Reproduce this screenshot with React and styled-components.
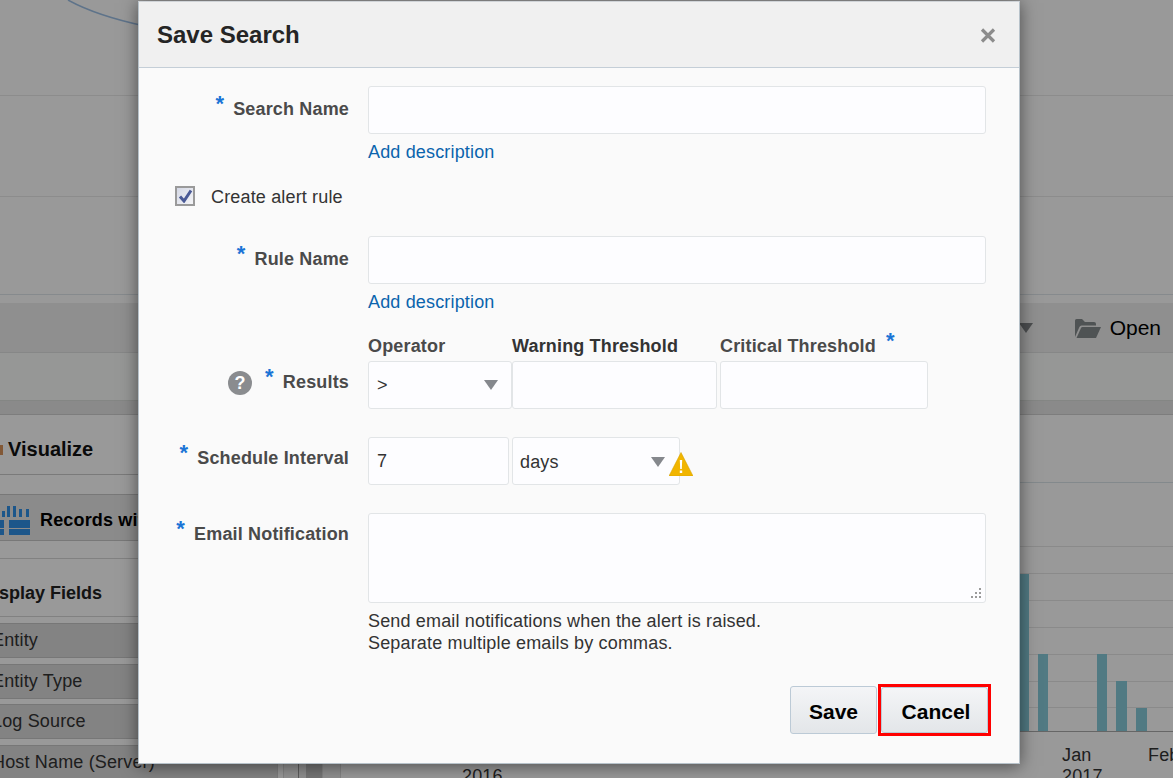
import React from "react";
import styled, { createGlobalStyle } from "styled-components";

const Global = createGlobalStyle`
  html, body { margin: 0; padding: 0; background: #fff; }
  * { box-sizing: border-box; }
`;
const FONT = `"Liberation Sans", Arial, sans-serif`;

const Page = styled.div`
  position: relative; width: 1173px; height: 778px; overflow: hidden;
  font-family: ${FONT}; font-size: 18px; letter-spacing: .16px; color: #333; background: #fff;
  display: flex; flex-direction: column;
`;
const TopChart = styled.div`
  height: 303px; flex: none; background: #fff;
  svg { display: block; }
`;
const Toolbar = styled.div`
  height: 50px; flex: none; background: #eee; border-bottom: 1px solid #dfe2e2;
  display: flex; align-items: center; justify-content: flex-end; padding: 0 12px 0 0;
`;
const Caret = styled.svg`width: 14px; height: 10px; flex: none; display: block;`;
const OpenLabel = styled.span`font-size: 21px; letter-spacing: 0; color: #000; margin-left: 9px;`;
const FolderIcon = styled.svg`width: 27px; height: 20px; margin-left: 41px; display: block;`;
const SubBar = styled.div`height: 48px; flex: none; background: #fafcfa; border-bottom: 1px solid #dcdfdc;`;
const Band = styled.div`height: 14px; flex: none; background: #e6e6e6; border-bottom: 1px solid #d0d0d0;`;
const Lower = styled.div`flex: 1; display: flex; min-height: 0;`;
const LeftPanel = styled.div`
  width: 278px; flex: none; overflow: hidden; border-right: 1px solid #d0d0d0; background: #fff;
`;
const VisualizeRow = styled.div`
  height: 60px; display: flex; align-items: center; gap: 5px; border-bottom: 1px solid #ccc;
  font-size: 20px; letter-spacing: 0; font-weight: bold; color: #111; padding-top: 10px;
`;
const VisMark = styled.span`width: 3px; height: 10px; background: #d9935a; flex: none;`;
const RecordsRow = styled.div`
  height: 47px; margin-top: 19px; background: #e8e8e8; border-top: 1px solid #c8c8c8; border-bottom: 1px solid #c8c8c8;
  display: flex; align-items: center; gap: 9px; font-size: 18px; font-weight: bold; color: #000; white-space: nowrap;
`;
const RecordsLabel = styled.span`padding-top: 6px;`;
const RecordsIcon = styled.svg`width: 31px; height: 32px; display: block; flex: none; margin-top: 2px;`;
const FieldsHead = styled.div`
  margin-top: 17px; height: 59px; border-top: 1px solid #d8d8d8; border-bottom: 1px solid #d8d8d8;
  font-size: 18px; letter-spacing: 0; font-weight: bold; color: #222; display: flex; align-items: center; padding-top: 12px;
  span { margin-left: -19px; white-space: nowrap; }
`;
const FieldList = styled.div`padding-top: 6px; display: flex; flex-direction: column; gap: 5.6px;`;
const FieldItem = styled.div`
  height: 35px; background: #dadada; border-top: 1px solid #c6c6c6; border-bottom: 1px solid #c6c6c6;
  display: flex; align-items: center; white-space: nowrap; color: #333;
  span { margin-left: -8px; }
`;
const Gutter = styled.div`width: 5px; flex: none; background: #fff;`;
const SidePane = styled.div`width: 16px; flex: none; background: #f4f4f4; border-left: 1px solid #ddd; border-right: 1px solid #999;`;
const SideGap = styled.div`width: 7px; flex: none; background: #eee;`;
const Splitter = styled.div`width: 16px; flex: none; background: #c4c4c4;`;
const SidePaneWide = styled.div`width: 19px; flex: none; background: #f0f0f0; border-left: 1px solid #ddd; border-right: 1px solid #ddd;`;
const ChartPane = styled.div`
  flex: 1; min-width: 0;
  svg { display: block; }
`;
const Overlay = styled.div`position: absolute; inset: 0; background: rgba(0,0,0,.4);`;

const Dialog = styled.div`
  position: absolute; left: 138px; top: 1px; width: 882px; height: 763px;
  background: #fafafa; border: 1px solid #b7c2ca; border-top-color: #d0d4d8;
  box-shadow: 0 2px 16px rgba(0,0,0,.5);
  display: flex; flex-direction: column;
`;
const Header = styled.div`
  height: 66px; flex: none; background: #f0f0f0; border-bottom: 1px solid #c4ced7;
  display: flex; align-items: center; justify-content: space-between; padding: 0 23px 0 18px;
`;
const Title = styled.h1`margin: 0; font-size: 24px; letter-spacing: 0; font-weight: bold; color: #252525; line-height: 30px;`;
const CloseIcon = styled.svg`width: 16px; height: 15px; display: block; margin-top: 2px;`;
const Body = styled.div`flex: 1; padding: 18px 33px 0 0; display: flex; flex-direction: column;`;
const FormRow = styled.div`
  display: grid; grid-template-columns: 210px 618px; column-gap: 19px; align-items: start;
  margin-top: ${p => p.$mt || 0}px;
`;
const Label = styled.label`
  display: flex; justify-content: flex-end; align-items: flex-start;
  padding-top: ${p => p.$top}px; font-weight: bold; color: #4a4a4a; line-height: 22px; white-space: nowrap;
`;
const Star = styled.span`
  font-family: ${FONT}; font-size: 22px; font-weight: bold; color: #1a74d6; line-height: 22px;
  margin: -5px ${p => p.$mr ?? 9}px 0 ${p => p.$ml ?? 0}px;
`;
const TextField = styled.input`
  display: block; width: ${p => p.$w || "100%"}; height: 48px; border: 1px solid #e2e5e7; border-radius: 3px;
  background: #fdfdff; font: 18px ${FONT}; color: #333; padding: 0 8px; outline: none; flex: none;
`;
const LinkLine = styled.a`
  display: block; margin-top: 7px; line-height: 22px; color: #0a64ad; text-decoration: none; width: max-content;
`;
const CheckRow = styled.div`
  display: flex; align-items: center; gap: 16px; margin: 23px 0 0 36px; height: 20px; color: #333;
`;
const CheckText = styled.span`padding-top: 2px;`;
const CheckBox = styled.span`
  width: 20px; height: 20px; flex: none; border: 2px solid #9a9a9a; background: linear-gradient(135deg,#d5d9e6,#f4f4f6);
  display: flex; align-items: center; justify-content: center;
  svg { width: 15px; height: 14px; display: block; }
`;
const HelpBadge = styled.span`
  width: 24px; height: 24px; border-radius: 50%; background: #8a8c8f; color: #fff; font-weight: bold; font-size: 18px;
  display: flex; align-items: center; justify-content: center; margin: 0 13px 0 0; flex: none; line-height: 24px;
`;
const ThresholdGrid = styled.div`
  display: grid; grid-template-columns: 144px 205px 208px; row-gap: 4px;
`;
const ColHead = styled.div`
  font-weight: bold; line-height: 22px; color: ${p => p.$dark ? "#333" : "#4a4a4a"}; white-space: nowrap; display: flex;
  margin-left: ${p => p.$ml || 0}px;
`;
const SelectBox = styled.div`
  height: 48px; width: ${p => p.$w}px; flex: none; margin-left: ${p => p.$ml || 0}px; border: 1px solid #e2e5e7; border-radius: 3px; background: #fdfdff;
  display: flex; align-items: center; justify-content: space-between; padding: ${p => p.$pad};
  color: #333;
`;
const ThresholdInput = styled(TextField)`margin-left: ${p => p.$ml || 0}px;`;
const ScheduleFields = styled.div`display: flex; align-items: flex-start;`;
const WarnIcon = styled.svg`width: 24px; height: 24px; flex: none; display: block; margin: 15px 0 0 -11px;`;
const AreaBox = styled.div`
  position: relative; height: 90px; border: 1px solid #e2e5e7; border-radius: 3px; background: #fdfdff;
`;
const Grip = styled.svg`position: absolute; right: 3px; bottom: 3px; width: 11px; height: 11px; display: block;`;
const Hint = styled.p`margin: 7px 0 0; line-height: 22px; color: #333;`;
const Actions = styled.div`display: flex; justify-content: flex-end; margin: 32px -5px 0 0; gap: 1px; align-items: flex-start;`;
const Btn = styled.button`
  width: ${p => p.$w}px; height: ${p => p.$h}px; display: block;
  border: 1px solid #bccad6; border-radius: 3px; background: linear-gradient(#f4f5f7,#e3e6e9);
  font: bold 21px ${FONT}; color: #000; padding: 3px 0 0 ${p => p.$pl || 0}px;
`;
const FlagFrame = styled.div`margin-top: -2px; border: 3px solid #f00; background: #fafafa;`;

const Down = ({ fill = "#85888d", ...rest }) => (
  <Caret viewBox="0 0 14 10" {...rest}><path d="M0 0H14L7 10Z" fill={fill} /></Caret>
);

const Req = ({ children, top, help }) => (
  <Label $top={top}>
    {help && <HelpBadge>?</HelpBadge>}
    <Star>*</Star>
    {children}
  </Label>
);

export default function App() {
  return (
    <Page>
      <Global />
      <TopChart>
        <svg width="1173" height="303" viewBox="0 0 1173 303">
          <path d="M68 0C88 11 112 19 145 26" fill="none" stroke="#9dc0e6" strokeWidth="1.500" />
          <path d="M0 95.5H1173M0 196.5H1173" stroke="#eaeaea" />
          <path d="M0 294.5H1173" stroke="#e0e6ec" />
        </svg>
      </TopChart>
      <Toolbar>
        <Down fill="#7f8385" />
        <FolderIcon viewBox="0 0 27 20">
          <path d="M1 19V2.5Q1 1 2.5 1H8l3 3h9q2 0 2 2v1.500H7.500Q6 7.500 5.400 9Z" fill="#848a8c" />
          <path d="M2.500 20L7 10q.5-1 1.500-1H27l-5 11Z" fill="#848a8c" />
        </FolderIcon>
        <OpenLabel>Open</OpenLabel>
      </Toolbar>
      <SubBar />
      <Band />
      <Lower>
        <LeftPanel>
          <VisualizeRow><VisMark />Visualize</VisualizeRow>
          <RecordsRow>
            <RecordsIcon viewBox="0 0 31 32">
              <path d="M2 8h3v6H2zM7 3h3v11H7zM13 3h3v11h-3zM19 6h3v8h-3zM26 6h3v8h-3zM0 17h4v8H0zM9 17h21v8H9zM0 26h4v7H0zM9 26h21v7H9z" fill="#2f8fe6" />
            </RecordsIcon>
            <RecordsLabel>Records with Histogram</RecordsLabel>
          </RecordsRow>
          <FieldsHead><span>Display Fields</span></FieldsHead>
          <FieldList>
            <FieldItem><span>Entity</span></FieldItem>
            <FieldItem><span>Entity Type</span></FieldItem>
            <FieldItem><span>Log Source</span></FieldItem>
            <FieldItem><span>Host Name (Server)</span></FieldItem>
          </FieldList>
        </LeftPanel>
        <Gutter />
        <SidePane />
        <SideGap />
        <Splitter />
        <SidePaneWide />
        <ChartPane>
          <svg width="832" height="363" viewBox="341 415 832 363" fontFamily={FONT} fontSize="18" fill="#333">
            <path d="M341 482.500H1173" stroke="#dbe4ea" />
            <path d="M341 546.500H1173M341 573.500H1173M341 600.500H1173M341 627.500H1173M341 654.500H1173M341 681.500H1173M341 707.500H1173" stroke="#e6e6e6" />
            <path d="M1008 574h21v157h-21zM1038 654h10v77h-10zM1097 654h10v77h-10zM1116 681h11v50h-11zM1136 708h11v23h-11z" fill="#87cbda" />
            <path d="M341 731.500H1173" stroke="#aaa" />
            <text x="462" y="782">2016</text>
            <text x="1062" y="761">Jan</text>
            <text x="1062" y="782">2017</text>
            <text x="1148" y="761">Feb</text>
          </svg>
        </ChartPane>
      </Lower>
      <Overlay />
      <Dialog role="dialog">
        <Header>
          <Title>Save Search</Title>
          <CloseIcon viewBox="0 0 16 15">
            <path d="M2 1.500L14 13.500M14 1.500L2 13.500" stroke="#8c8c8c" strokeWidth="3.200" />
          </CloseIcon>
        </Header>
        <Body>
          <FormRow>
            <Req top={12}>Search Name</Req>
            <div>
              <TextField />
              <LinkLine>Add description</LinkLine>
            </div>
          </FormRow>
          <CheckRow>
            <CheckBox>
              <svg viewBox="0 0 15 14"><path d="M2 7.500L6 12L13 1.500" fill="none" stroke="#4a5a96" strokeWidth="3" /></svg>
            </CheckBox>
            <CheckText>Create alert rule</CheckText>
          </CheckRow>
          <FormRow $mt={30}>
            <Req top={12}>Rule Name</Req>
            <div>
              <TextField />
              <LinkLine>Add description</LinkLine>
            </div>
          </FormRow>
          <FormRow $mt={22}>
            <Req top={36} help>Results</Req>
            <ThresholdGrid>
              <ColHead>Operator</ColHead>
              <ColHead $dark>Warning Threshold</ColHead>
              <ColHead $ml={3}>Critical Threshold<Star $ml={10} $mr={0}>*</Star></ColHead>
              <SelectBox $w={144} $pad="0 13px 0 8px"><span>&gt;</span><Down /></SelectBox>
              <TextField $w="205px" />
              <ThresholdInput $w="208px" $ml={3} />
            </ThresholdGrid>
          </FormRow>
          <FormRow $mt={28}>
            <Req top={10}>Schedule Interval</Req>
            <ScheduleFields>
              <TextField $w="141px" defaultValue="7" />
              <SelectBox $w={168} $ml={3} $pad="2px 14px 0 7px"><span>days</span><Down /></SelectBox>
              <WarnIcon viewBox="0 0 24 24">
                <path d="M12 .5L24 24H0Z" fill="#f1b500" stroke="#d9a400" strokeWidth=".6" />
                <path d="M10.800 8h2.400l-.4 9h-1.600zM10.800 18.500h2.400v2.500h-2.400z" fill="#fff" />
              </WarnIcon>
            </ScheduleFields>
          </FormRow>
          <FormRow $mt={28}>
            <Req top={10}>Email Notification</Req>
            <div>
              <AreaBox>
                <Grip viewBox="0 0 11 11" fill="#9a9a9a">
                  <path d="M8 0h2v2H8zM4 4h2v2H4zM8 4h2v2H8zM0 8h2v2H0zM4 8h2v2H4zM8 8h2v2H8z" />
                </Grip>
              </AreaBox>
              <Hint>Send email notifications when the alert is raised.<br />Separate multiple emails by commas.</Hint>
            </div>
          </FormRow>
          <Actions>
            <Btn $w={87} $h={48}>Save</Btn>
            <FlagFrame>
              <Btn $w={107} $h={46} $pl={3}>Cancel</Btn>
            </FlagFrame>
          </Actions>
        </Body>
      </Dialog>
    </Page>
  );
}
